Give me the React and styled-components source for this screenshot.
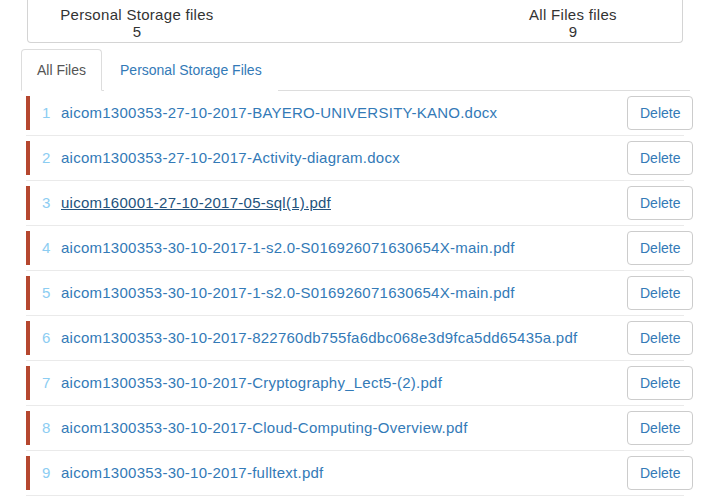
import React from "react";
import styled, { createGlobalStyle } from "styled-components";

const Global = createGlobalStyle`
  html, body { margin: 0; padding: 0; background: #fff; }
  body {
    font-family: "Liberation Sans", Arial, sans-serif;
    font-size: 14px;
    line-height: 1.42857;
    color: #333;
  }
`;

const Page = styled.div`
  width: 723px;
  overflow: hidden;
`;

const StatsCard = styled.div`
  margin: 0 40px 0 27px;
  border: 1px solid #d4d4d4;
  border-top: none;
  border-radius: 0 0 4px 4px;
  padding: 6px 0 2px;
  display: grid;
  grid-template-columns: repeat(3, 1fr);
`;

const Stat = styled.div`
  text-align: center;
  font-size: 15px;
  letter-spacing: 0.3px;
  line-height: 17px;
  grid-column: ${(p) => p.$col};
`;

const Tabs = styled.ul`
  list-style: none;
  margin: 6px 33px 0 21px;
  padding: 0;
  display: flex;
  border-bottom: 1px solid #ddd;
`;

const Tab = styled.li`
  margin-right: 2px;
  margin-bottom: -1px;
  padding: 10px 15px;
  border: 1px solid ${(p) => (p.$active ? "#ddd" : "transparent")};
  border-bottom-color: ${(p) => (p.$active ? "#fff" : "transparent")};
  border-radius: 4px 4px 0 0;
  background: #fff;
  color: ${(p) => (p.$active ? "#555" : "#337ab7")};
  line-height: 20px;
  cursor: pointer;
`;

const List = styled.div`
  margin: 0 39px 0 26px;
`;

const Item = styled.div`
  padding: 5px 0;
  border-bottom: 1px solid #eaeaea;
`;

const Inner = styled.div`
  display: flex;
  align-items: center;
  height: 34px;
  border-left: 4px solid #b5472f;
  margin-right: -9px;
  font-size: 15px;
`;

const Num = styled.span`
  width: 31px;
  padding-left: 12px;
  box-sizing: border-box;
  color: #8ccdf2;
`;

const FileLink = styled.a`
  flex: 1;
  letter-spacing: 0.25px;
  color: ${(p) => (p.$hover ? "#23527c" : "#337ab7")};
  text-decoration: ${(p) => (p.$hover ? "underline" : "none")};
  cursor: pointer;
`;

const DeleteBtn = styled.button`
  height: 34px;
  width: 66px;
  padding: 6px 12px;
  font-family: inherit;
  font-size: 14px;
  line-height: 20px;
  color: #337ab7;
  background: #fff;
  border: 1px solid #ccc;
  border-radius: 4px;
  cursor: pointer;
`;

const files = [
  "aicom1300353-27-10-2017-BAYERO-UNIVERSITY-KANO.docx",
  "aicom1300353-27-10-2017-Activity-diagram.docx",
  "uicom160001-27-10-2017-05-sql(1).pdf",
  "aicom1300353-30-10-2017-1-s2.0-S016926071630654X-main.pdf",
  "aicom1300353-30-10-2017-1-s2.0-S016926071630654X-main.pdf",
  "aicom1300353-30-10-2017-822760db755fa6dbc068e3d9fca5dd65435a.pdf",
  "aicom1300353-30-10-2017-Cryptography_Lect5-(2).pdf",
  "aicom1300353-30-10-2017-Cloud-Computing-Overview.pdf",
  "aicom1300353-30-10-2017-fulltext.pdf",
];

export default function App() {
  return (
    <Page>
      <Global />
      <StatsCard>
        <Stat $col={1}>
          Personal Storage files
          <br />5
        </Stat>
        <Stat $col={3}>
          All Files files
          <br />9
        </Stat>
      </StatsCard>
      <Tabs>
        <Tab $active>All Files</Tab>
        <Tab>Personal Storage Files</Tab>
      </Tabs>
      <List>
        {files.map((f, i) => (
          <Item key={i}>
            <Inner>
              <Num>{i + 1}</Num>
              <FileLink $hover={i === 2}>{f}</FileLink>
              <DeleteBtn>Delete</DeleteBtn>
            </Inner>
          </Item>
        ))}
      </List>
    </Page>
  );
}
